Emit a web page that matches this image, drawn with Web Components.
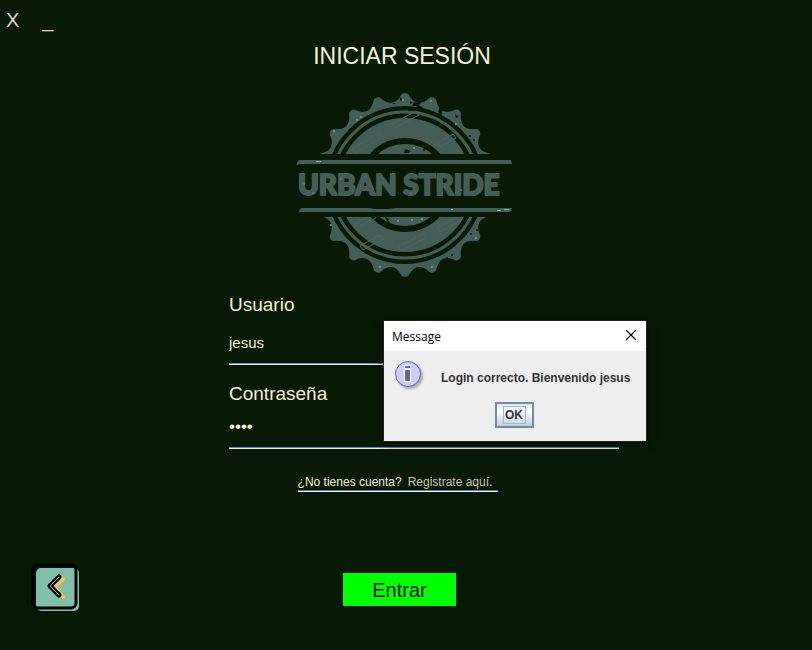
<!DOCTYPE html>
<html lang="es">
<head>
<meta charset="utf-8">
<title>Urban Stride</title>
<style>
  html, body { margin: 0; min-height: 100%; background: #081a05; }
  body { font-family: "Liberation Sans", Arial, sans-serif; color: #f5f0dc; }
</style>
</head>
<body>
<login-screen>
  <window-controls slot="controls"></window-controls>
  <brand-badge slot="logo"></brand-badge>
  <line-field slot="fields" label="Usuario" name="user" type="text" value="jesus"></line-field>
  <line-field slot="fields" label="Contraseña" name="pass" type="password" value="1234"></line-field>
  <signup-hint slot="hint"></signup-hint>
  <back-button slot="back"></back-button>
  <submit-button slot="submit">Entrar</submit-button>
  <message-dialog slot="dialog" heading="Message">Login correcto. Bienvenido jesus</message-dialog>
</login-screen>

<script>
const define = (name, html, setup) => {
  const tpl = document.createElement('template');
  tpl.innerHTML = html;
  customElements.define(name, class extends HTMLElement {
    constructor() {
      super();
      this.attachShadow({ mode: 'open' }).append(tpl.content.cloneNode(true));
    }
    connectedCallback() { if (setup) setup(this, this.shadowRoot); }
  });
};

define('window-controls', `
<style>
  :host { display: flex; gap: 23px; padding: 8px 6px 0; }
  button { all: unset; font-size: 20px; line-height: 24px; color: #e6d3cb; cursor: pointer; }
</style>
<button type="button" aria-label="Cerrar">X</button>
<button type="button" aria-label="Minimizar">_</button>`);

define('brand-badge', `
<style>
  :host { display: block; }
  svg { display: block; }
  text { font: 900 28px Lato, sans-serif; }
</style>
<svg width="220" height="190" viewBox="295 90 220 190" role="img" aria-label="Urban Stride">
  <defs>
    <clipPath id="halves"><path d="M295 90H515V154H295ZM295 217H515V280H295Z"/></clipPath>
  </defs>
  <g clip-path="url(#halves)">
    <path class="gear" fill="#455d57"/>
    <circle cx="405" cy="185" r="79" fill="#081a05"/>
    <circle cx="405" cy="185" r="73" fill="none" stroke="#455d57" stroke-width="3"/>
    <circle cx="405" cy="185" r="67" fill="#455d57"/>
    <circle cx="405" cy="185" r="47" fill="#081a05"/>
    <circle cx="405" cy="185" r="41" fill="#455d57"/>
    <g fill="none" stroke="#4f655e" stroke-width="1">
      <path d="M352 149l27-16 3 4-27 16zM392 124l24-13 3 4-24 13zM437 143l16-9 3 4-16 9z"/>
      <path d="M354 224l19-10 3 4-19 10zM360 246l20-11 3 4-20 11zM398 247l26-14 3 4-26 14zM437 228l22-12 3 4-22 12z"/>
    </g>
    <g fill="#081a05">
      <path d="M405 149l3 1 3 1-3 2-4 0zM385 217l5 2-3 2zM400 97l3 3-3 1zM414 102l7 1-2 2 4 3-4 1-3-3-4 0zM439 108l4 1-2 7-3-2zM455 114l4 3-3 1zM461 119l4 4-3 0zM392 103l4 0-2 1zM388 220l3 4-4-2zM410 101l3 2-3 1z"/>
      <circle cx="470" cy="136" r="1"/><circle cx="474" cy="140" r="1"/><circle cx="467" cy="243" r="1"/>
      <circle cx="471" cy="234" r="1"/><circle cx="447" cy="258" r="1"/><circle cx="442" cy="261" r="1"/>
      <circle cx="452" cy="255" r="1"/><circle cx="477" cy="230" r="1"/><circle cx="424" cy="150" r="1"/>
    </g>
    <g fill="#78a096">
      <circle cx="361" cy="117" r="1"/><circle cx="357" cy="120" r="1"/><circle cx="431" cy="101" r="1"/>
      <circle cx="403" cy="100" r="1"/><circle cx="456" cy="124" r="1"/><circle cx="334" cy="131" r="1"/>
      <circle cx="398" cy="221" r="1"/><circle cx="412" cy="220" r="1"/><circle cx="422" cy="219" r="1"/>
      <circle cx="380" cy="267" r="1"/><circle cx="432" cy="267" r="1"/><circle cx="476" cy="238" r="1"/>
      <circle cx="414" cy="148" r="1"/><circle cx="331" cy="225" r="1"/>
    </g>
  </g>
  <path fill="#455d57" d="M297 163L299 160H511L512 164H300L297 165ZM299 211L301 208H370L374 209H388L396 208H512L510 212H299Z"/>
  <path stroke="#8fb0a6" stroke-width="1" d="M316 161.500h5M497 210.500h4M504 209.500h5M451 209.500h2"/>
  <text x="298" y="195" fill="#455d57" stroke="#455d57" stroke-width="2" stroke-linejoin="round">URBAN STRIDE</text>
  <g fill="#5d7b73">
    <circle cx="304" cy="184" r="1"/><circle cx="313" cy="193" r="1"/><circle cx="341" cy="179" r="1"/>
    <circle cx="411" cy="194" r="1"/><circle cx="461" cy="190" r="1"/>
  </g>
</svg>`, (el, root) => {
  const teeth = 20, cx = 405, cy = 185;
  const at = (deg, r) => {
    const a = deg * Math.PI / 180;
    return (cx + r * Math.sin(a)).toFixed(1) + ' ' + (cy - r * Math.cos(a)).toFixed(1);
  };
  let d = 'M' + at(-2, 91);
  for (let i = 0; i < teeth; i++) {
    const t = i * 360 / teeth;
    d += `Q${at(t, 93)} ${at(t + 2, 91)}Q${at(t + 9, 76)} ${at(t + 16, 91)}`;
  }
  root.querySelector('.gear').setAttribute('d', d + 'Z');
});

define('line-field', `
<style>
  :host { display: block; }
  label { display: block; font-size: 19px; line-height: 24px; }
  input {
    display: block; box-sizing: border-box; width: 100%; height: 34px; margin: 0; padding: 0;
    border: 0; outline: 0; background: none; color: inherit; font: 15px "Liberation Sans", Arial, sans-serif;
  }
  input[type=text] { margin-top: 8px; }
  input[type=password] { margin-top: 6px; height: 32px; padding-bottom: 2px; font-size: 17px; }
  hr { height: 1px; margin: 3px 0 0; border: 0; border-top: 1px solid #5f86c8; background: #f5f0dc; }
  input[type=text] + hr { margin-top: 4px; }
</style>
<label for="field"></label>
<input id="field">
<hr>`, (el, root) => {
  const input = root.querySelector('input');
  root.querySelector('label').textContent = el.getAttribute('label');
  input.type = el.getAttribute('type');
  input.name = el.getAttribute('name');
  input.value = el.getAttribute('value');
});

define('signup-hint', `
<style>
  :host { display: block; font-size: 12px; line-height: 16px; }
  p { display: flex; gap: 6px; margin: 0; padding: 1px 6px 0 0; }
  a { color: #c9c2b0; text-decoration: none; }
  div { height: 1px; border-top: 1px solid #4a78d8; background: #fff; }
</style>
<p><span>¿No tienes cuenta?</span><a href="#registro">Registrate aquí.</a></p>
<div></div>`);

define('back-button', `
<style>
  :host { display: block; }
  button { all: unset; display: block; cursor: pointer; }
  svg { display: block; }
</style>
<button type="button" aria-label="Volver">
  <svg width="48" height="48" viewBox="0 0 48 48">
    <rect x="5" y="5" width="43" height="43" rx="5" fill="#82bfa6"/>
    <rect x="2" y="2" width="43" height="43" rx="5" fill="none" stroke="#000" stroke-width="3"/>
    <path d="M32 16L23 24L32 34" fill="none" stroke="#f4c350" stroke-width="4" stroke-linecap="round" stroke-linejoin="round"/>
    <path d="M28 14L19 23L28 32" fill="none" stroke="#000" stroke-width="5" stroke-linecap="round" stroke-linejoin="round"/>
    <path d="M28 14L19 23L28 32" fill="none" stroke="#82bfa6" stroke-width="1" stroke-linecap="round" stroke-linejoin="round"/>
  </svg>
</button>`);

define('submit-button', `
<style>
  :host { display: block; }
  button { display: block; border: 0; padding: 5px 29px 4px; background: #00ff00; color: #04140a; font: 20px/24px "Liberation Sans", Arial, sans-serif; cursor: pointer; }
</style>
<button type="submit"><slot></slot></button>`);

define('message-dialog', `
<style>
  :host { display: block; }
  section { width: 262px; background: #eee; color: #333; box-shadow: 0 0 0 1px #1c241b, 0 2px 10px #000a; }
  header { display: flex; align-items: center; justify-content: space-between; height: 30px; padding: 0 9px 0 8px; background: #fff; color: #000; font: 12px "Open Sans", "Noto Sans", sans-serif; }
  header button { all: unset; display: flex; cursor: pointer; }
  .row { display: flex; align-items: flex-start; gap: 14px; padding: 8px 10px 0; font-size: 12px; font-weight: bold; line-height: 16px; }
  .row svg { flex: none; }
  p { margin: 0; padding-top: 11px; white-space: nowrap; }
  footer { display: flex; justify-content: center; padding: 10px 2px 13px 0; }
  footer button {
    box-sizing: border-box; width: 39px; height: 26px; padding: 2px 7px; border: 2px solid #7a8a99;
    background: linear-gradient(#dce8f3, #fff 35%, #b8cfe5); color: #333; font: bold 12px/16px "Liberation Sans", Arial, sans-serif;
  }
  footer span { display: block; margin: 0 -1px; border: 1px solid #a3b8cc; }
</style>
<section role="dialog" aria-labelledby="title">
  <header>
    <span id="title"></span>
    <button type="button" aria-label="Cerrar mensaje"><svg width="12" height="12" viewBox="0 0 12 12"><path d="M1 0L11 10M11 0L1 10" stroke="#000" stroke-width="1.200"/></svg></button>
  </header>
  <div class="row">
    <svg width="33" height="33" viewBox="0 0 33 33">
      <defs><filter id="soft" x="-20%" y="-20%" width="150%" height="150%"><feGaussianBlur stdDeviation="1.200"/></filter></defs>
      <circle cx="16" cy="17" r="13" fill="#aaa" filter="url(#soft)"/>
      <circle cx="14" cy="15" r="12.500" fill="#ccf" stroke="#669" stroke-width="1"/>
      <path d="M10 6h7v4h-7zM10 10h7v13h-7z" fill="#fff"/>
      <path d="M11 7h5v2h-5zM11 11h5v11h-5z" fill="#669"/>
    </svg>
    <p><slot></slot></p>
  </div>
  <footer><button type="button"><span>OK</span></button></footer>
</section>`, (el, root) => {
  root.querySelector('#title').textContent = el.getAttribute('heading');
});

define('login-screen', `
<style>
  :host { display: block; position: relative; min-height: 100vh; background: #081a05; }
  h1 { margin: 10px 8px 20px 0; font-size: 23px; font-weight: normal; line-height: 28px; text-align: center; }
  .logo { display: flex; justify-content: center; padding-right: 2px; }
  form { display: block; margin: 0; }
  .fields { display: grid; gap: 17px; margin: 13px 193px 0 229px; }
  .hint { display: flex; justify-content: center; margin: 24px 16px 0 0; }
  .actions { display: grid; grid-template-columns: 1fr auto 1fr; padding: 71px 44px 39px 31px; }
  .actions .submit { padding-top: 10px; }
  .overlay { position: absolute; top: 321px; left: calc(50% - 22px); }
</style>
<slot name="controls"></slot>
<h1>INICIAR SESIÓN</h1>
<div class="logo"><slot name="logo"></slot></div>
<form>
  <div class="fields"><slot name="fields"></slot></div>
  <div class="hint"><slot name="hint"></slot></div>
  <div class="actions"><slot name="back"></slot><div class="submit"><slot name="submit"></slot></div></div>
</form>
<div class="overlay"><slot name="dialog"></slot></div>`);
</script>
</body>
</html>
